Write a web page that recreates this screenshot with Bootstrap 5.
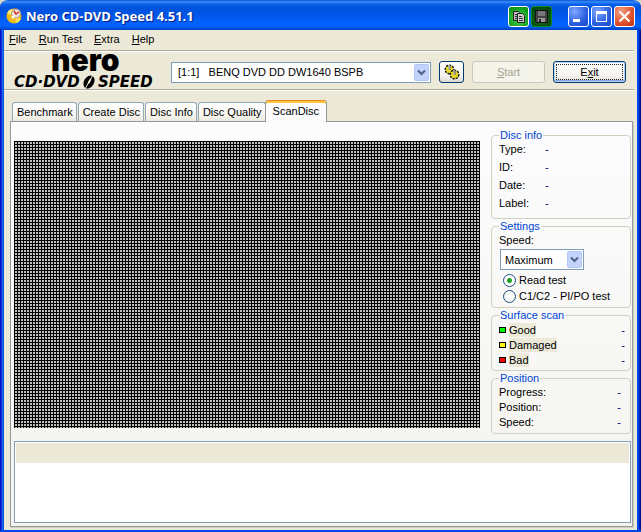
<!DOCTYPE html>
<html lang="en">
<head>
<meta charset="utf-8">
<meta name="viewport" content="width=device-width, initial-scale=1">
<title>Nero CD-DVD Speed 4.51.1</title>
<link href="https://cdn.jsdelivr.net/npm/bootstrap@5.3.0/dist/css/bootstrap.min.css" rel="stylesheet">
<style>
body{font:11px/14px "Liberation Sans",Arial,sans-serif;color:#000;background:#d8d5c6}
button,input,select{font:inherit;color:inherit}
.app-window{background:linear-gradient(90deg,#0014c8 0 1px,#0831d9 1px 2px,#166aee 2px 3px,#0855dd 3px 4px,#ece9d8 4px calc(100% - 4px),#0046f0 calc(100% - 4px) calc(100% - 2px),#0020b0 calc(100% - 2px) calc(100% - 1px),#00138c calc(100% - 1px));border-radius:8px 8px 0 0;padding:0 4px 4px;position:relative}
.app-window::after{content:"";position:absolute;left:0;right:0;bottom:0;height:4px;background:linear-gradient(#0046e8 50%,#0020b0 50% 75%,#00138c 75%)}
.title-bar{height:30px;margin:0 -4px;padding:2px 6px 0 6px;gap:2px;border-radius:8px 8px 0 0;background:linear-gradient(#0a58d8 0,#3a8cf8 2px,#0b62ee 4px,#0153dc 8px,#0055e5 14px,#0262fc 22px,#0263ff 26px,#0152e0 28px,#0040c0 30px)}
.title-text{font:bold 13px/20px "Noto Sans","Open Sans",sans-serif;color:#fff;text-shadow:1px 1px 1px #0a1883;padding-left:2px}
.cap-btn{width:21px;height:21px;border:1px solid #fff;border-radius:3px;background:radial-gradient(circle at 30% 25%,#7fa8ff,#2a5fe0 60%,#1c48c8)}
.cap-min{margin-left:14px}
.cap-close{background:radial-gradient(circle at 30% 25%,#f0a080,#e0502c 60%,#b83010)}
.cap-copy{background:radial-gradient(circle at 50% 60%,#4cd850,#15a020 70%,#0a8010)}
.cap-save{border-color:#0a9018;background:radial-gradient(circle at 50% 60%,#226828,#075010 70%,#003c08)}
.menu-row{height:20px;padding-left:5px;padding-bottom:2px;gap:12px}
.menu-row a{color:#000;text-decoration:none}
.rule{height:2px;margin-right:3px;border-top:1px solid #aca899;border-bottom:1px solid #fff}
.tool-row{height:37px;padding:3px 11px 0 8px}
.logo{margin-top:-3px;overflow:visible}
.xp-select{appearance:none;border:1px solid #7f9db9;border-radius:0;height:21px;padding:0 20px 0 4px;outline:0;background:#fff url("data:image/svg+xml,%3Csvg xmlns='http://www.w3.org/2000/svg' width='15' height='17'%3E%3Crect x='.5' y='.5' width='14' height='16' rx='1' fill='%23c3d3fb' stroke='%23b4c8f6'/%3E%3Cpath d='M4 6.5l3.5 3.5L11 6.5' fill='none' stroke='%234d6185' stroke-width='2'/%3E%3C/svg%3E") no-repeat right 1px center}
.drive-select{padding-left:6px;min-width:0;margin-left:12px}
.speed-select{width:84px;margin:2px 0 2px 1px}
.xp-btn{height:22px;width:73px;padding:0;border:1px solid #003c74;border-radius:3px;background:linear-gradient(#fff,#f4f3ee 70%,#dcd8cc)}
.xp-btn:disabled{border-color:#cac8bb;background:#f5f4ea;color:#a5a294}
.opt-btn{width:25px;margin-left:8px;margin-right:8px}
.exit-btn{box-shadow:inset 0 0 0 1px #bcd0f4,inset 0 -2px 0 #89a4e4;outline:1px dotted #222;outline-offset:-4px;margin-left:8px}
.tab-row{padding:10px 0 0 8px;height:30px}
.tab-btn{height:19px;border:1px solid #91a7b4;border-bottom:0;border-radius:3px 3px 0 0;padding:0 3px 0 4px;margin-right:1px;background:linear-gradient(#fff,#f8f7f2 60%,#ebe9dd);white-space:nowrap}
.tab-btn.active{height:22px;margin:0 0 -1px -2px;padding:0 7px 1px;border-color:#e68b2c #919b9c;box-shadow:inset 0 2px #ffc73c;background:#fcfcfe;z-index:1}
.tab-page{border:1px solid #919b9c;margin:0 4px 3px 6px;padding:6px 1px 3px 3px;box-shadow:1px 1px #d0cebf;background:linear-gradient(#fcfcfe,#f4f3ee)}
.surface-map{margin:13px 11px 6px 0;background:repeating-linear-gradient(90deg,#000 0 1px,transparent 1px 3px),repeating-linear-gradient(#000 0 1px,#c0c0c0 1px 3px)}
.side-col{width:140px;flex:none}
.group-box{border:1px solid #d0d0bf;border-radius:4px;padding:0 5px 3px 7px;margin:0}
.group-box legend{float:none;width:auto;margin:0;padding:0 1px;font-size:11px;line-height:14px;color:#0046d5}
.info-row{height:18px}
.info-row dt{width:46px}
.stat-row{height:15px}
.info-row dt,.stat-row dt{font-weight:400}
.val{color:#000080;margin:0}
.swatch{width:7px;height:6px;border:1px solid #000;margin-right:3px}
.sw-good{background:#0f0}.sw-dam{background:#ff0}.sw-bad{background:#f00}
.tint{background:#ece9d8}
.radio-row{height:16px;padding-left:4px;gap:3px}
.radio-row input{appearance:none;width:13px;height:13px;border:1px solid #1c5180;border-radius:50%;background:radial-gradient(#fff,#eeeee8);margin:0}
.radio-row input:checked{background:radial-gradient(circle,#21a121 0 2px,#fff 3px)}
.log-box{border:1px solid #7f9db9;background:#fff;height:82px;padding:1px;margin:7px 0 0}
.log-head{height:20px;background:#ece9d8}
</style>
<script src="https://cdn.jsdelivr.net/npm/bootstrap@5.3.0/dist/js/bootstrap.bundle.min.js"></script>
</head>
<body>
<div class="app-window d-flex flex-column min-vh-100">
  <header class="title-bar d-flex align-items-center">
    <svg width="16" height="16" viewBox="0 0 16 16" aria-hidden="true"><circle cx="8" cy="8" r="7.5" fill="#f0b818"/><path d="M8 8L1 5A7.5 7.5 0 0 1 6 1z" fill="#fff27a"/><path d="M8 8l7 3a7.5 7.5 0 0 1-5 4z" fill="#ffe04c"/><circle cx="10" cy="5.500" r="4.500" fill="#e8e4e0" stroke="#b98a70"/><path d="M8 3l2 3 3-2" stroke="#d42c20" stroke-width="1.500" fill="none"/><circle cx="7" cy="9" r="1.500" fill="#fff"/></svg>
    <span class="title-text flex-fill">Nero CD-DVD Speed 4.51.1</span>
    <button class="cap-btn cap-copy p-0 d-flex" aria-label="Copy"><svg width="19" height="19"><path d="M4.500 4.500h5l1 1v8h-6z" fill="#bbb" stroke="#222"/><path d="M8.500 6.500h5l2 2v7h-7z" fill="#ccc" stroke="#222"/><path d="M10 9.500h3M10 11.500h4M10 13.500h4M6 7.500h2M6 9.500h2M6 11.500h2" stroke="#333"/></svg></button>
    <button class="cap-btn cap-save p-0 d-flex" aria-label="Save"><svg width="19" height="19"><path d="M3.500 3.500h12v12h-11l-1-1z" fill="#444" stroke="#111"/><path d="M6 4h7v5H6z" fill="#777"/><path d="M6 11h7v4H6z" fill="#999"/><path d="M7 12h2v3H7z" fill="#222"/></svg></button>
    <button class="cap-btn cap-min p-0 d-flex" aria-label="Minimize"><svg width="19" height="19"><path d="M4 12h7v3H4z" fill="#fff"/></svg></button>
    <button class="cap-btn p-0 d-flex" aria-label="Maximize"><svg width="19" height="19"><path d="M4 4h11v11H4zM5 7v7h9V7z" fill="#fff" fill-rule="evenodd"/></svg></button>
    <button class="cap-btn cap-close p-0 d-flex" aria-label="Close"><svg width="19" height="19"><path d="M4.500 4.500l10 10m0-10l-10 10" stroke="#fff" stroke-width="2"/></svg></button>
  </header>
  <nav class="menu-row d-flex align-items-center">
    <a href="#"><u>F</u>ile</a><a href="#"><u>R</u>un Test</a><a href="#"><u>E</u>xtra</a><a href="#"><u>H</u>elp</a>
  </nav>
  <div class="rule"></div>
  <div class="tool-row d-flex align-items-center">
    <svg width="147" height="37" class="logo flex-shrink-0" role="img" aria-label="nero CD-DVD SPEED">
      <text x="39" y="19" font-family="Inter, sans-serif" font-weight="900" font-size="30">nero</text>
      <g font-family="DejaVu Sans, sans-serif" font-weight="bold" font-style="italic" font-size="15"><text x="2" y="35">CD·DVD</text><text x="86" y="35">SPEED</text></g>
      <g transform="rotate(30 77 30)"><ellipse cx="77" cy="30" rx="5" ry="7"/><ellipse cx="77" cy="29" rx="1" ry="3" fill="#ece9d8"/></g><path d="M73 37l8-14" stroke="#ece9d8"/>
    </svg>
    <select class="xp-select drive-select flex-fill" aria-label="Drive"><option>[1:1]&nbsp;&nbsp; BENQ DVD DD DW1640 BSPB</option></select>
    <button class="xp-btn opt-btn flex-shrink-0 d-flex align-items-center justify-content-center" aria-label="Options"><svg width="18" height="18"><g stroke="#111" fill="#e8d820"><circle cx="6.500" cy="6.500" r="4" stroke-width="2" stroke-dasharray="2 1"/><circle cx="6.500" cy="6.500" r="3.500" stroke="none"/><circle cx="11.500" cy="11.500" r="4" stroke-width="2" stroke-dasharray="2 1"/><circle cx="11.500" cy="11.500" r="3.500" stroke="none"/></g><path d="M6.500 2v5M11.500 7v5" stroke="#555" stroke-width="2"/><path d="M6 2v5M11 7v5" stroke="#ddd"/></svg></button>
    <button class="xp-btn flex-shrink-0" disabled><u>S</u>tart</button>
    <button class="xp-btn exit-btn flex-shrink-0">E<u>x</u>it</button>
  </div>
  <div class="rule"></div>
  <div class="tab-row d-flex align-items-end" role="tablist">
    <button class="tab-btn" role="tab">Benchmark</button><button class="tab-btn" role="tab">Create Disc</button><button class="tab-btn" role="tab">Disc Info</button><button class="tab-btn" role="tab">Disc Quality</button><button class="tab-btn active" role="tab" aria-selected="true">ScanDisc</button>
  </div>
  <main class="tab-page flex-fill d-flex flex-column">
    <div class="d-flex flex-fill">
      <div class="surface-map flex-fill" role="img" aria-label="Disc surface map"></div>
      <div class="side-col">
        <fieldset class="group-box pb-1"><legend>Disc info</legend>
          <dl class="mb-0">
            <div class="info-row d-flex"><dt>Type:</dt><dd class="val">-</dd></div>
            <div class="info-row d-flex"><dt>ID:</dt><dd class="val">-</dd></div>
            <div class="info-row d-flex"><dt>Date:</dt><dd class="val">-</dd></div>
            <div class="info-row d-flex"><dt>Label:</dt><dd class="val">-</dd></div>
          </dl>
        </fieldset>
        <fieldset class="group-box"><legend>Settings</legend>
          <label for="speed" class="d-block">Speed:</label>
          <select id="speed" class="xp-select speed-select d-block"><option>Maximum</option></select>
          <div class="radio-row d-flex align-items-center"><input type="radio" name="mode" id="m1" checked><label for="m1">Read test</label></div>
          <div class="radio-row d-flex align-items-center"><input type="radio" name="mode" id="m2"><label for="m2">C1/C2 - PI/PO test</label></div>
        </fieldset>
        <fieldset class="group-box"><legend>Surface scan</legend>
          <dl class="mb-0">
            <div class="stat-row d-flex align-items-center"><span class="swatch sw-good"></span><dt class="tint">Good</dt><dd class="val ms-auto">-</dd></div>
            <div class="stat-row d-flex align-items-center"><span class="swatch sw-dam"></span><dt class="tint">Damaged</dt><dd class="val ms-auto">-</dd></div>
            <div class="stat-row d-flex align-items-center"><span class="swatch sw-bad"></span><dt class="tint">Bad</dt><dd class="val ms-auto">-</dd></div>
          </dl>
        </fieldset>
        <fieldset class="group-box"><legend>Position</legend>
          <dl class="mb-0">
            <div class="stat-row d-flex"><dt>Progress:</dt><dd class="val ms-auto me-1">-</dd></div>
            <div class="stat-row d-flex"><dt>Position:</dt><dd class="val ms-auto me-1">-</dd></div>
            <div class="stat-row d-flex"><dt>Speed:</dt><dd class="val ms-auto me-1">-</dd></div>
          </dl>
        </fieldset>
      </div>
    </div>
    <div class="log-box"><div class="log-head"></div></div>
  </main>
</div>
</body>
</html>
